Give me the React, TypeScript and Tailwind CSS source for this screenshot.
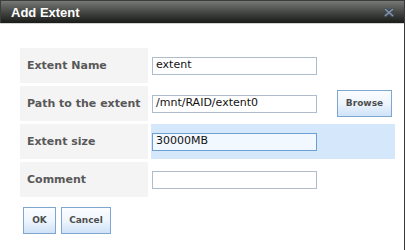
import React from "react";

const dv = { fontFamily: '"DejaVu Sans", Verdana, sans-serif' } as React.CSSProperties;

function Btn({ w, children }: { w: string; children: React.ReactNode }) {
  return (
    <div
      className={`${w} h-[27px] border border-[#7fa6cf] bg-linear-to-b from-[#fbfdff] via-[#eef5fd] to-[#cfe2f8] flex items-center justify-center text-[9px] font-bold text-[#4d4d4d]`}
      style={dv}
    >
      {children}
    </div>
  );
}

function Label({ children }: { children: React.ReactNode }) {
  return (
    <div className="h-[35px] bg-[#f4f4f4] flex items-center pl-[7px] pt-[1px] text-[11px] font-bold text-[#585858] whitespace-nowrap" style={dv}>
      {children}
    </div>
  );
}

function Input({ value, focus }: { value: string; focus?: boolean }) {
  return (
    <div
      className={`w-[165px] h-[18px] border flex items-center pl-[3px] text-[11px] text-[#111] ${
        focus ? "border-[#6d9fd4] bg-[#f1f8ff]" : "border-[#aebccb] bg-white"
      }`}
      style={dv}
    >
      {value}
    </div>
  );
}

export default function App() {
  return (
    <div className="w-[406px] h-[250px] bg-white flex">
      <div className="w-[404px] h-full flex flex-col">
        <div className="h-[23px] border-t border-l border-[#3c3e3c] bg-linear-to-b from-[#767976] via-[#454845] to-[#1a1c1a] flex items-center justify-between pl-[10px] pr-[10px]">
          <span className="text-white font-bold text-[13px] leading-none" style={{ fontFamily: '"Liberation Sans", Arial, sans-serif' }}>
            Add Extent
          </span>
          <svg width="10" height="9" viewBox="0 0 10 9">
            <path d="M1.5 1.5 L8.5 7.5 M8.5 1.5 L1.5 7.5" stroke="#3f4b58" strokeWidth="3.2" strokeLinecap="square" />
            <path d="M1.5 1.5 L8.5 7.5 M8.5 1.5 L1.5 7.5" stroke="#8596ab" strokeWidth="1.5" strokeLinecap="square" />
          </svg>
        </div>
        <div className="h-[1px] bg-[#d4d4d4]" />
        <div className="pl-[20px] pt-[24px]">
          <div className="grid grid-cols-[128px_244px] gap-x-[3px] gap-y-[3px]">
            <Label>Extent Name</Label>
            <div className="h-[35px] flex items-center pl-[1px]">
              <Input value="extent" />
            </div>
            <Label>Path to the extent</Label>
            <div className="h-[35px] flex items-center pl-[1px]">
              <Input value="/mnt/RAID/extent0" />
              <div className="ml-[20px]">
                <Btn w="w-[55px]">Browse</Btn>
              </div>
            </div>
            <Label>Extent size</Label>
            <div className="h-[35px] flex items-center pl-[1px] bg-[#d5e8fb]">
              <Input value="30000MB" focus />
            </div>
            <Label>Comment</Label>
            <div className="h-[35px] flex items-center pl-[1px]">
              <Input value="" />
            </div>
          </div>
          <div className="flex gap-[5px] mt-[10px] ml-[3px]">
            <Btn w="w-[33px]">OK</Btn>
            <Btn w="w-[50px]">Cancel</Btn>
          </div>
        </div>
      </div>
      <div className="w-[1px] h-full bg-[#3a3a3a]" />
      <div className="w-[1px] h-full bg-white" />
    </div>
  );
}
